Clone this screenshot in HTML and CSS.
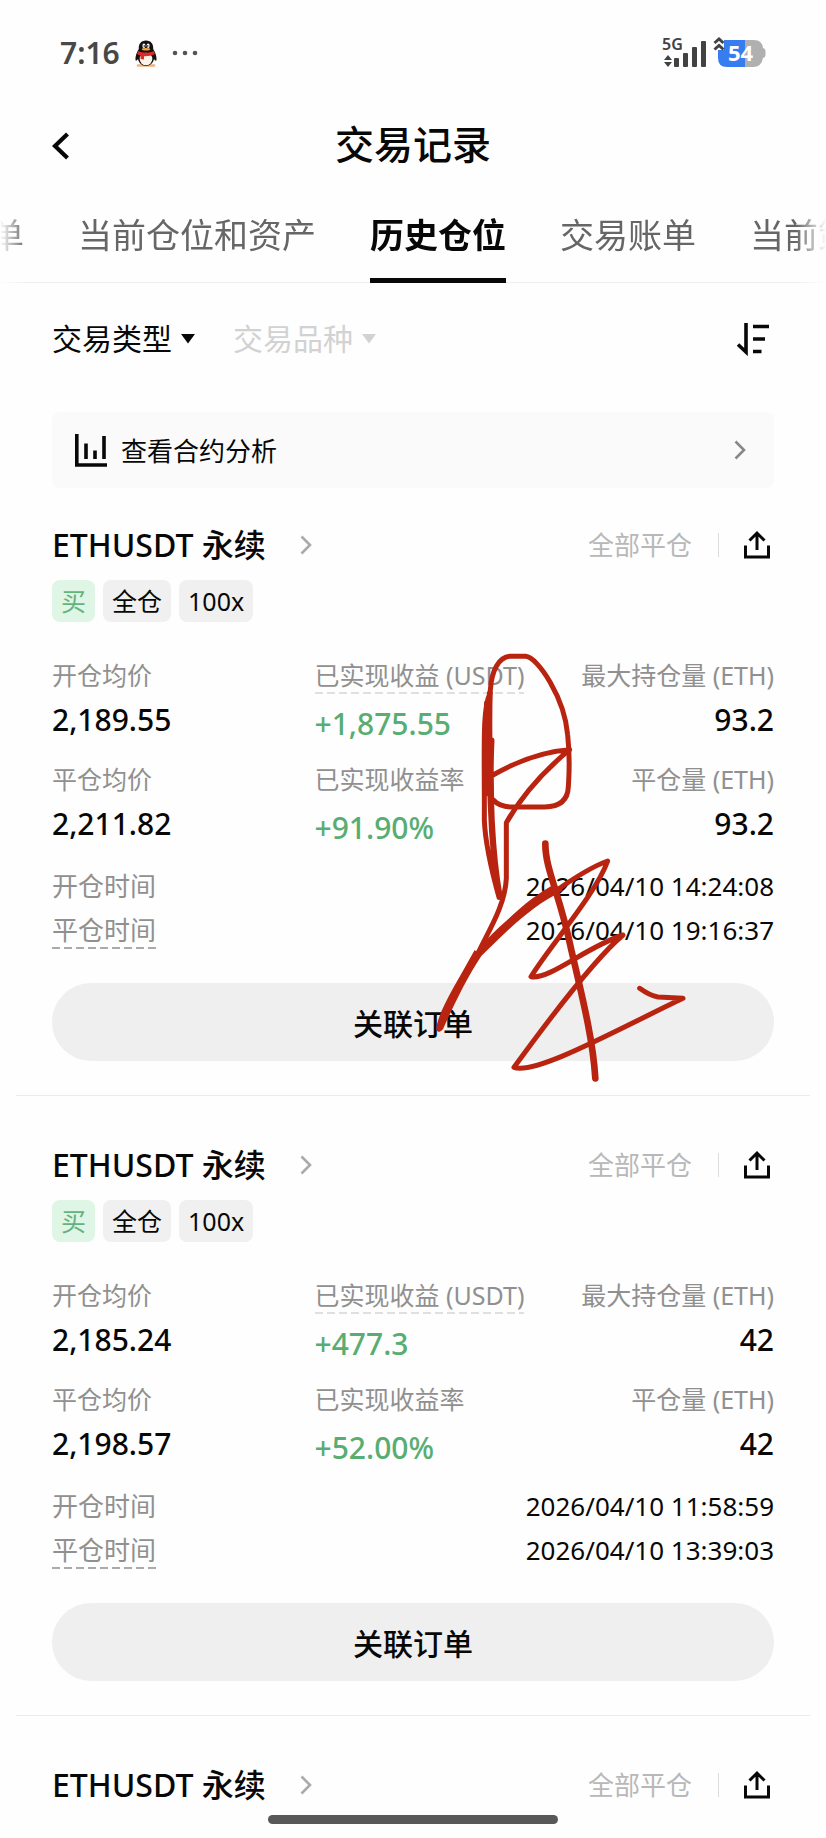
FILE: index.html
```html
<!DOCTYPE html>
<html lang="zh-CN">
<head>
<meta charset="utf-8">
<meta name="viewport" content="width=device-width, initial-scale=1">
<title>交易记录</title>
<link rel="stylesheet" href="styles.css">
</head>
<body>
<svg class="defs" aria-hidden="true">
  <symbol id="chevron" viewBox="0 0 12 20"><path d="M1.5 1.5 10 10l-8.500 8.500" fill="none" stroke="currentColor" stroke-width="2.600"/></symbol>
  <symbol id="share" viewBox="0 0 28 30"><path d="M2.500 15.500V27h23V15.500M14 20V3.500M6.500 10.500 14 3l7.500 7.500" fill="none" stroke="currentColor" stroke-width="3"/></symbol>
  <symbol id="caret" viewBox="0 0 14 10"><path d="M0 0h14L7 9.500z" fill="currentColor"/></symbol>
</svg>

<div class="statusbar">
  <div class="status-left">
    <span class="clock">7:16</span>
    <svg class="penguin" viewBox="0 0 22 27" aria-hidden="true">
      <path d="M3 25.500h16" stroke="#f0b27a" stroke-width="2.500" stroke-linecap="round"/>
      <path d="M11 .5c-5 0-7.500 3.500-7.200 8.500C1.500 12.500.2 16.500.5 20c.3 1.500 1.500.5 2.500-1 .8 4 4 7 8 7s7.200-3 8-7c1 1.500 2.200 2.500 2.500 1 .3-3.500-1-7.500-3.300-11C18.500 4 16 .5 11 .5z" fill="#16110f"/>
      <ellipse cx="11" cy="19" rx="6.300" ry="6.300" fill="#fbf3ea"/>
      <ellipse cx="8.900" cy="5.800" rx="1.500" ry="2.200" fill="#fff"/>
      <ellipse cx="13.100" cy="5.800" rx="1.500" ry="2.200" fill="#fff"/>
      <circle cx="9.300" cy="6" r=".8"/><circle cx="12.700" cy="6" r=".8"/>
      <ellipse cx="11" cy="9.300" rx="4.200" ry="1.300" fill="#f2a33a"/>
      <path d="M3 11c4.500 2.300 11.500 2.300 16 0l.8 3c-3 1.700-7 2.400-10.800 2.200v3.300l-3.500-.6.200-3.300c-1.300-.4-2.500-.9-3.500-1.600z" fill="#dd2a2c"/>
    </svg>
    <svg class="dots" viewBox="0 0 26 6" aria-hidden="true"><g fill="#555"><circle cx="3" cy="3" r="2.300"/><circle cx="13" cy="3" r="2.300"/><circle cx="23" cy="3" r="2.300"/></g></svg>
  </div>
  <svg class="status-right" viewBox="0 0 106 40" role="img" aria-label="5G 54%">
    <text class="net" x="1" y="17">5G</text>
    <g fill="#424242">
      <path d="M7 22l4 5H3zM7 34l4-5H3z"/>
      <rect x="13" y="25" width="5" height="9" rx="1"/>
      <rect x="22" y="20" width="5" height="14" rx="1"/>
      <rect x="31" y="14" width="5" height="20" rx="1"/>
      <rect x="40" y="8" width="5" height="26" rx="1"/>
    </g>
    <path d="M66 7h27q8 0 9 8 2.500.5 2.500 3v4q0 2.500-2.500 3-1.500 9-10 9H66z" fill="#b0b0b0"/>
    <path d="M63 7h21v27H66q-9 0-9-9v-8h6z" fill="#387df0"/>
    <path d="M53.500 10l4.500-4 4.500 4M53.500 16.500l4.500-4 4.500 4" fill="none" stroke="#424242" stroke-width="3"/>
    <text class="level" x="67" y="28">54</text>
  </svg>
</div>

<header class="titlebar">
  <button class="back" type="button" aria-label="返回"><svg viewBox="0 0 20 30" aria-hidden="true"><path d="M16.500 3 4 15l12.500 12" fill="none" stroke="currentColor" stroke-width="4.200"/></svg></button>
  <h1>交易记录</h1>
</header>

<nav class="tabs">
  <a href="#orders" class="tab">单</a>
  <a href="#positions" class="tab">当前仓位和资产</a>
  <a href="#history" class="tab active" aria-current="page">历史仓位</a>
  <a href="#bills" class="tab">交易账单</a>
  <a href="#strategy" class="tab">当前策</a>
</nav>

<main>
  <div class="filters">
    <span class="filter"><select aria-label="交易类型"><option>交易类型</option></select><svg class="caret"><use href="#caret"/></svg></span>
    <span class="filter muted"><select aria-label="交易品种" disabled><option>交易品种</option></select><svg class="caret"><use href="#caret"/></svg></span>
    <button class="sort" type="button" aria-label="排序"><svg viewBox="0 0 34 34" aria-hidden="true"><path d="M10 1v29L2 22.500M17 4.500h16M17 17h12M17 29.500h8.500" fill="none" stroke="currentColor" stroke-width="3.600"/></svg></button>
  </div>

  <a class="analysis" href="#analysis">
    <svg class="chart" viewBox="0 0 32 33" aria-hidden="true"><path d="M1.800 0v31H32M11 9.500V25M20 16.500V25M29 2v23" fill="none" stroke="currentColor" stroke-width="3.600"/></svg>
    <span>查看合约分析</span>
    <svg class="chevron"><use href="#chevron"/></svg>
  </a>

  <article class="card">
    <div class="card-head">
      <a class="symbol" href="#p1"><h2>ETHUSDT 永续</h2><svg class="chevron"><use href="#chevron"/></svg></a>
      <span class="state">全部平仓</span>
      <button class="share" type="button" aria-label="分享"><svg><use href="#share"/></svg></button>
    </div>
    <div class="tags"><span class="tag buy">买</span><span class="tag">全仓</span><span class="tag">100x</span></div>
    <dl class="stats">
      <div><dt>开仓均价</dt><dd>2,189.55</dd></div>
      <div class="gain"><dt><span class="dashed light">已实现收益 (USDT)</span></dt><dd>+1,875.55</dd></div>
      <div class="end"><dt>最大持仓量 (ETH)</dt><dd>93.2</dd></div>
      <div><dt>平仓均价</dt><dd>2,211.82</dd></div>
      <div class="gain"><dt>已实现收益率</dt><dd>+91.90%</dd></div>
      <div class="end"><dt>平仓量 (ETH)</dt><dd>93.2</dd></div>
    </dl>
    <dl class="times">
      <div><dt>开仓时间</dt><dd>2026/04/10 14:24:08</dd></div>
      <div><dt><span class="dashed">平仓时间</span></dt><dd>2026/04/10 19:16:37</dd></div>
    </dl>
    <button class="related" type="button">关联订单</button>
    <svg class="scribble" viewBox="0 0 840 1350" aria-hidden="true">
      <g fill="none" stroke="#b92410" stroke-width="15" stroke-linecap="round" stroke-linejoin="round">
        <path d="M236 480C231 360 228 260 232 150C236 90 258 52 290 49H338C375 52 455 175 464 285C472 360 469 390 466 440Q464 500 395 501H305Q262 503 241 480"/>
        <path d="M231 160C207 210 215 330 214 540C217 620 238 700 258 772C228 600 228 420 229 160M237 300C230 450 238 640 262 772"/>
        <path d="M222 190V460" stroke-width="18"/>
        <path d="M240 405C310 365 385 335 470 329C390 395 325 470 280 548V715C276 800 222 880 195 940"/>
        <path d="M190 945C270 850 340 800 425 755C500 702 550 675 584 663C550 760 405 925 354 1010C410 1020 520 920 630 885C530 970 370 1190 303 1282C370 1305 610 1170 810 1075L735 1071Q710 1067 680 1045"/>
        <path d="M397 611C397 690 440 760 475 930C510 1080 540 1200 547 1315" stroke-width="20"/>
      </g>
      <path d="M185 930L205 948C160 1015 115 1110 90 1168Q75 1184 70 1168C72 1120 130 1030 185 930zM190 950C280 830 350 775 425 732L450 752C350 800 275 880 198 955z" fill="#b92410"/>
    </svg>
  </article>

  <article class="card">
    <div class="card-head">
      <a class="symbol" href="#p2"><h2>ETHUSDT 永续</h2><svg class="chevron"><use href="#chevron"/></svg></a>
      <span class="state">全部平仓</span>
      <button class="share" type="button" aria-label="分享"><svg><use href="#share"/></svg></button>
    </div>
    <div class="tags"><span class="tag buy">买</span><span class="tag">全仓</span><span class="tag">100x</span></div>
    <dl class="stats">
      <div><dt>开仓均价</dt><dd>2,185.24</dd></div>
      <div class="gain"><dt><span class="dashed light">已实现收益 (USDT)</span></dt><dd>+477.3</dd></div>
      <div class="end"><dt>最大持仓量 (ETH)</dt><dd>42</dd></div>
      <div><dt>平仓均价</dt><dd>2,198.57</dd></div>
      <div class="gain"><dt>已实现收益率</dt><dd>+52.00%</dd></div>
      <div class="end"><dt>平仓量 (ETH)</dt><dd>42</dd></div>
    </dl>
    <dl class="times">
      <div><dt>开仓时间</dt><dd>2026/04/10 11:58:59</dd></div>
      <div><dt><span class="dashed">平仓时间</span></dt><dd>2026/04/10 13:39:03</dd></div>
    </dl>
    <button class="related" type="button">关联订单</button>
  </article>

  <article class="card peek">
    <div class="card-head">
      <a class="symbol" href="#p3"><h2>ETHUSDT 永续</h2><svg class="chevron"><use href="#chevron"/></svg></a>
      <span class="state">全部平仓</span>
      <button class="share" type="button" aria-label="分享"><svg><use href="#share"/></svg></button>
    </div>
  </article>
</main>
<footer class="homebar"><span></span></footer>
</body>
</html>
```

FILE: styles.css
```css
* { box-sizing: border-box; }
body {
  margin: 0;
  background: #fefefe;
  color: #080808;
  font-family: "Noto Sans", "Noto Sans CJK SC", sans-serif;
  font-size: 26px;
  white-space: nowrap;
  overflow-x: hidden;
}
h1, h2, dl, dd { margin: 0; }
h1, h2, dd { font-weight: 500; }
a { color: inherit; text-decoration: none; }
button, select { font: inherit; color: inherit; border: 0; padding: 0; background: none; }
svg { display: block; flex: none; }
.defs { position: absolute; width: 0; height: 0; }

.statusbar {
  display: flex;
  align-items: center;
  justify-content: space-between;
  height: 106px;
  padding: 0 59px 0 60px;
}
.status-left { display: flex; align-items: center; gap: 15px; }
.clock { font-size: 30px; font-weight: 600; color: #484848; line-height: 40px; }
.penguin { width: 22px; height: 27px; }
.dots { width: 26px; height: 6px; }
.status-right { width: 106px; height: 40px; }
.net { font-size: 16px; font-weight: 600; fill: #424242; }
.level { font-size: 22px; font-weight: 700; fill: #fff; }

.titlebar {
  display: grid;
  grid-template-columns: 1fr auto 1fr;
  align-items: center;
  height: 79px;
  padding: 0 51px;
}
.titlebar h1 { padding-bottom: 4px; font-size: 39px; line-height: 56px; }
.back { justify-self: start; }
.back svg { width: 20px; height: 30px; }

.tabs {
  display: flex;
  gap: 54px;
  overflow: hidden;
  background: linear-gradient(#eee, #eee) bottom / 100% 1px no-repeat;
  mask-image: linear-gradient(90deg, transparent, #000 26px, #000 calc(100% - 30px), transparent);
}
.tab {
  flex: none;
  padding: 25px 0 18px;
  border-bottom: 5px solid transparent;
  color: #666;
  font-size: 34px;
  line-height: 50px;
}
.tab:first-child { margin-left: -10px; }
.tab.active { color: #080808; font-weight: 700; border-color: #080808; }

.filters {
  display: flex;
  align-items: center;
  gap: 38px;
  margin: 28px 52px 45px;
  height: 56px;
}
.filter { display: flex; align-items: center; gap: 9px; font-size: 30px; }
.filter select { appearance: none; line-height: 44px; opacity: 1; }
.filter.muted { color: #d2d2d2; }
.caret { width: 14px; height: 10px; }
.sort { margin-left: auto; padding-right: 4px; }
.sort svg { width: 34px; height: 34px; }

.analysis {
  display: flex;
  align-items: center;
  gap: 14px;
  height: 76px;
  margin: 0 52px;
  padding: 0 28px 0 23px;
  border-radius: 8px;
  background: #fafafa;
}
.chart { width: 32px; height: 33px; }
.chevron { width: 12px; height: 20px; color: #aaa; }
.analysis .chevron { margin-left: auto; color: #888; }

.card { position: relative; padding: 49px 52px 34px; }
.analysis + .card { padding-top: 37px; }
.card:not(.peek) {
  border-bottom: 1px solid;
  border-image: linear-gradient(90deg, transparent 2%, #ebebeb 2%, #ebebeb 98%, transparent 98%) 1;
}
.card.peek { padding-bottom: 0; }
.card-head { display: flex; align-items: center; height: 40px; }
.symbol { display: flex; align-items: center; gap: 34px; }
.symbol h2 { font-size: 32px; line-height: 40px; }
.state { margin-left: auto; padding-right: 26px; color: #b8b8b8; line-height: 38px; }
.share { padding: 0 3px 0 25px; background: linear-gradient(#ddd, #ddd) left / 1px 24px no-repeat; }
.share svg { width: 28px; height: 30px; }

.tags { display: flex; gap: 8px; margin-top: 15px; }
.tag {
  height: 42px;
  padding: 0 9px;
  border-radius: 8px;
  background: #f0f0f0;
  font-size: 25px;
  line-height: 42px;
}
.tag.buy { background: #dff5e6; color: #64b37c; }

.stats {
  display: grid;
  grid-template-columns: minmax(0, 4fr) minmax(0, 4fr) minmax(0, 3fr);
  row-gap: 18px;
  margin-top: 34px;
}
.stats > div { display: flex; flex-direction: column; gap: 8px; align-items: flex-start; }
.stats .gain { gap: 12px; }
.stats .end { align-items: flex-end; }
dt { color: #909090; line-height: 38px; }
.stats dt { font-size: 25px; }
.stats dd { font-size: 30px; line-height: 36px; }
.gain dd { color: #58ad72; }
.dashed {
  display: block;
  background: repeating-linear-gradient(90deg, #aaa 0 8px, transparent 8px 12px) bottom / 100% 2px no-repeat;
}
.dashed.light { background-image: repeating-linear-gradient(90deg, #e0e0e0 0 8px, transparent 8px 12px); }

.times { display: grid; gap: 6px; margin-top: 21px; }
.times > div { display: flex; justify-content: space-between; }
.times dd { font-weight: 400; line-height: 38px; }

.related {
  display: block;
  width: 100%;
  height: 78px;
  margin-top: 34px;
  border-radius: 39px;
  background: #efefef;
  font-size: 30px;
  font-weight: 500;
}
.scribble { position: absolute; left: 50%; top: 152px; width: 280px; height: 450px; pointer-events: none; }

.homebar { display: flex; justify-content: center; padding: 10px 0 14px; }
.homebar span { width: 35%; height: 9px; border-radius: 5px; background: #585858; }
```
